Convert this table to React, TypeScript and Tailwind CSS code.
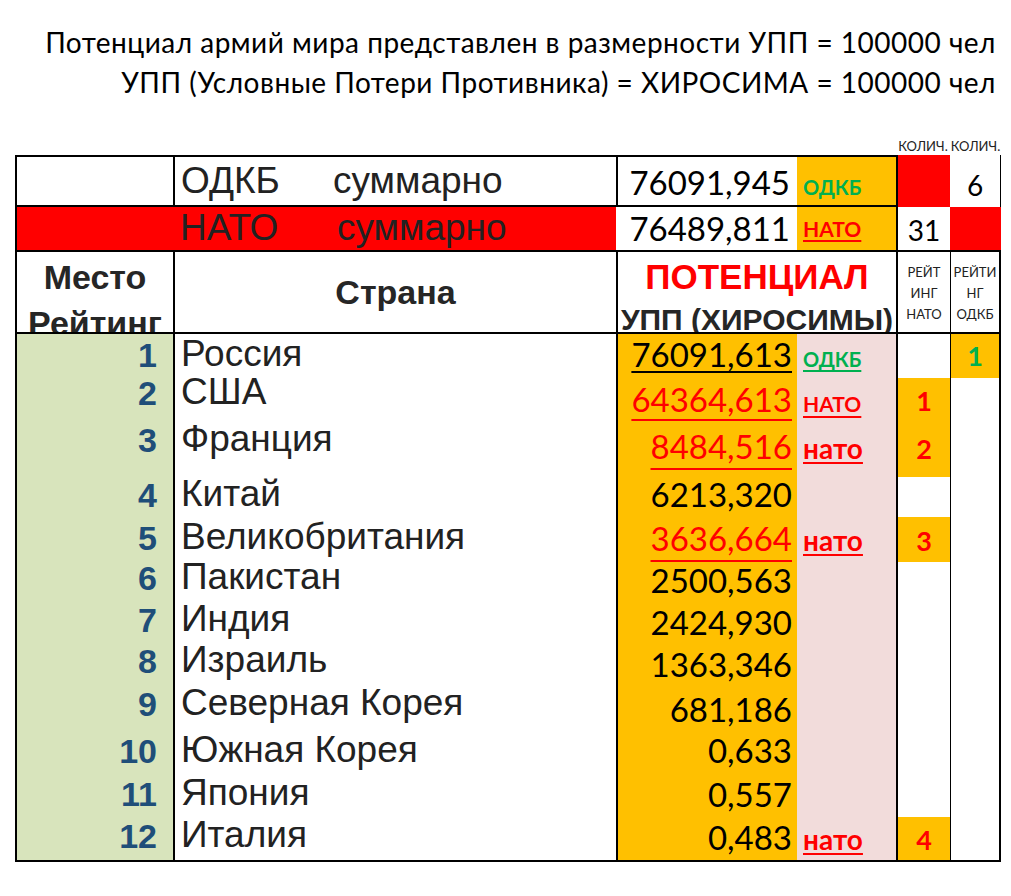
import React from 'react';

interface Row {
  n: number;
  country: string;
  value: string;
  valueCls: string;
  label?: string;
  labelCls?: string;
  nato?: string;
  odkb?: string;
  h: string;
  pa: string;
  pn: string;
  pl: string;
}

const numUnderlineRed = 'text-[#ff0000] underline decoration-[#ff0000] decoration-2 underline-offset-[9px]';
const natoLower = 'text-[28px] text-[#ff0000] underline decoration-2 underline-offset-[3px]';

const rows: Row[] = [
  { n: 1, country: 'Россия', value: '76091,613', valueCls: 'text-black underline decoration-2 underline-offset-[4px]', label: 'ОДКБ', labelCls: 'text-[20px] text-[#00b050] underline decoration-2 underline-offset-[3px]', odkb: '1', h: 'h-[44px]', pa: 'pb-[6px]', pn: 'pb-[7px]', pl: 'pb-[9px]' },
  { n: 2, country: 'США', value: '64364,613', valueCls: 'text-[#ff0000] underline decoration-[#ff0000] decoration-2 underline-offset-[7px]', label: 'НАТО', labelCls: 'text-[21px] text-[#ff0000] underline decoration-2 underline-offset-[4px]', nato: '1', h: 'h-[48px]', pa: 'pb-[16px]', pn: 'pb-[10px]', pl: 'pb-[12px]' },
  { n: 3, country: 'Франция', value: '8484,516', valueCls: numUnderlineRed, label: 'нато', labelCls: natoLower, nato: '2', h: 'h-[51px]', pa: 'pb-[20px]', pn: 'pb-[14px]', pl: 'pb-[15px]' },
  { n: 4, country: 'Китай', value: '6213,320', valueCls: 'text-black', h: 'h-[40px]', pa: 'pb-[5px]', pn: 'pb-[6px]', pl: 'pb-[7px]' },
  { n: 5, country: 'Великобритания', value: '3636,664', valueCls: numUnderlineRed, label: 'нато', labelCls: natoLower, nato: '3', h: 'h-[45px]', pa: 'pb-[7px]', pn: 'pb-[7px]', pl: 'pb-[8px]' },
  { n: 6, country: 'Пакистан', value: '2500,563', valueCls: 'text-black', h: 'h-[43px]', pa: 'pb-[10px]', pn: 'pb-[8px]', pl: 'pb-[9px]' },
  { n: 7, country: 'Индия', value: '2424,930', valueCls: 'text-black', h: 'h-[42px]', pa: 'pb-[10px]', pn: 'pb-[8px]', pl: 'pb-[9px]' },
  { n: 8, country: 'Израиль', value: '1363,346', valueCls: 'text-black', h: 'h-[43px]', pa: 'pb-[12px]', pn: 'pb-[9px]', pl: 'pb-[10px]' },
  { n: 9, country: 'Северная Корея', value: '681,186', valueCls: 'text-black', h: 'h-[42px]', pa: 'pb-[11px]', pn: 'pb-[6px]', pl: 'pb-[7px]' },
  { n: 10, country: 'Южная Корея', value: '0,633', valueCls: 'text-black', h: 'h-[43px]', pa: 'pb-[7px]', pn: 'pb-[8px]', pl: 'pb-[9px]' },
  { n: 11, country: 'Япония', value: '0,557', valueCls: 'text-black', h: 'h-[42px]', pa: 'pb-[6px]', pn: 'pb-[6px]', pl: 'pb-[7px]' },
  { n: 12, country: 'Италия', value: '0,483', valueCls: 'text-black', label: 'нато', labelCls: natoLower, nato: '4', h: 'h-[45px]', pa: 'pb-[7px]', pn: 'pb-[6px]', pl: 'pb-[7px]' },
];

// fixed track so tall text can't stretch a row
const grid = 'grid grid-cols-[158px_443px_181px_99px_54px_51px] grid-rows-[minmax(0,1fr)]';
const arial = "font-['Liberation_Sans',Arial,sans-serif]";
const calib = "font-['Lato','Open_Sans',sans-serif]";

function DataRow({ r, last }: { r: Row; last: boolean }) {
  const b = last ? 'border-b-2 border-black' : '';
  return (
    <div className={`${grid} ${r.h}`}>
      <div className={`flex min-h-0 items-end justify-end bg-[#d8e4bc] border-l-2 border-black pr-[16px] ${r.pa} ${b}`}>
        <span className={`${arial} text-[34px] leading-none font-bold text-[#1f4e79]`}>{r.n}</span>
      </div>
      <div className={`flex min-h-0 items-end border-l-2 border-black pl-[6px] ${r.pa} ${b}`}>
        <span className={`${arial} text-[37px] leading-none text-[#222]`}>{r.country}</span>
      </div>
      <div className={`flex min-h-0 items-end justify-end bg-[#ffc000] border-l-2 border-black pr-[5px] ${r.pn} ${b}`}>
        <span className={`${calib} text-[33px] leading-none ${r.valueCls}`}>{r.value}</span>
      </div>
      <div className={`flex min-h-0 items-end bg-[#f2dcdb] pl-[6px] ${r.pl} ${b}`}>
        {r.label && <span className={`${calib} leading-none font-bold ${r.labelCls}`}>{r.label}</span>}
      </div>
      <div className={`flex min-h-0 items-end justify-center border-l-2 border-black ${r.nato ? 'bg-[#ffc000]' : 'bg-white'} ${r.pl} ${b}`}>
        {r.nato && <span className={`${calib} text-[27px] leading-none font-bold text-[#ff0000]`}>{r.nato}</span>}
      </div>
      <div className={`flex min-h-0 items-end justify-center border-l border-r-2 border-black ${r.odkb ? 'bg-[#ffc000]' : 'bg-white'} ${r.pl} ${b}`}>
        {r.odkb && <span className={`${calib} text-[27px] leading-none font-bold text-[#00b050]`}>{r.odkb}</span>}
      </div>
    </div>
  );
}

export default function App() {
  return (
    <div className="w-[1011px] h-[896px] bg-white overflow-hidden text-black">
      {/* Title */}
      <div className={`${calib} text-right pr-[15px] pt-[22px] text-[28px] tracking-[0.5px] leading-[40px]`}>
        <div>Потенциал армий мира представлен в размерности УПП = 100000 чел</div>
        <div>УПП (Условные Потери Противника) = ХИРОСИМА = 100000 чел</div>
      </div>

      <div className="ml-[15px] mt-[35px] w-[986px]">
        {/* labels above */}
        <div className={`${grid} h-[18px]`}>
          <div className="col-span-4" />
          <div className={`${calib} text-[13px] leading-[18px] text-center text-[#222]`}>КОЛИЧ.</div>
          <div className={`${calib} text-[13px] leading-[18px] text-center text-[#222]`}>КОЛИЧ.</div>
        </div>

        {/* ODKB total */}
        <div className={`${grid} h-[52px]`}>
          <div className="border-l-2 border-y-2 border-black bg-white" />
          <div className={`flex items-end border-l-2 border-y-2 border-black bg-white pl-[6px] pb-[6px] ${arial} text-[37px] leading-none text-[#222]`}>
            <span className="w-[152px]">ОДКБ</span>
            <span>суммарно</span>
          </div>
          <div className="flex items-end justify-end border-l-2 border-y-2 border-black bg-white pr-[7px] pb-[6px]">
            <span className={`${calib} text-[33px] leading-none`}>76091,945</span>
          </div>
          <div className="flex items-end border-y-2 border-black bg-[#ffc000] pl-[6px] pb-[8px]">
            <span className={`${calib} text-[20px] leading-none font-bold text-[#00b050]`}>ОДКБ</span>
          </div>
          <div className="border-l-2 border-black bg-[#ff0000]" />
          <div className="flex items-end justify-center border-r border-black bg-white pb-[8px]">
            <span className={`${calib} text-[28px] leading-none`}>6</span>
          </div>
        </div>

        {/* NATO total */}
        <div className={`${grid} h-[45px]`}>
          <div className={`col-span-2 flex items-end border-l-2 border-b-2 border-black bg-[#ff0000] pl-[163px] pb-[4px] ${arial} text-[37px] leading-none text-[#222]`}>
            <span className="w-[157px]">НАТО</span>
            <span>суммарно</span>
          </div>
          <div className="flex items-end justify-end border-b-2 border-black bg-white pr-[7px] pb-[5px]">
            <span className={`${calib} text-[33px] leading-none`}>76489,811</span>
          </div>
          <div className="flex items-end border-b-2 border-black bg-[#ffc000] pl-[6px] pb-[11px]">
            <span className={`${calib} text-[21px] leading-none font-bold text-[#ff0000] underline decoration-2 underline-offset-[3px]`}>НАТО</span>
          </div>
          <div className="flex items-end justify-center border-l-2 border-b-2 border-black bg-white pb-[6px]">
            <span className={`${calib} text-[28px] leading-none`}>31</span>
          </div>
          <div className="border-b-2 border-black bg-[#ff0000]" />
        </div>

        {/* Header */}
        <div className={`${grid} h-[82px]`}>
          <div className={`overflow-hidden border-l-2 border-b-2 border-black bg-white pt-[2px] text-center ${arial} text-[34px] leading-[46px] font-bold text-[#262626]`}>
            <div>Место</div>
            <div>Рейтинг</div>
          </div>
          <div className={`flex items-center justify-center border-l-2 border-b-2 border-black bg-white ${arial} text-[34px] font-bold text-[#262626]`}>
            Страна
          </div>
          <div className={`col-span-2 overflow-hidden border-l-2 border-b-2 border-black bg-white text-center ${arial} font-bold`}>
            <div className="text-[35px] leading-[46px] pt-[2px] text-[#ff0000]">ПОТЕНЦИАЛ</div>
            <div className="text-[30px] leading-[40px] text-[#262626] whitespace-nowrap">УПП (ХИРОСИМЫ)</div>
          </div>
          <div className={`border-l-2 border-b-2 border-black bg-white pt-[10px] text-center ${calib} text-[13px] leading-[21px] text-[#222]`}>
            <div>РЕЙТ</div>
            <div>ИНГ</div>
            <div>НАТО</div>
          </div>
          <div className={`border-l border-r-2 border-b-2 border-black bg-white pt-[10px] text-center ${calib} text-[13px] leading-[21px] text-[#222]`}>
            <div>РЕЙТИ</div>
            <div>НГ</div>
            <div>ОДКБ</div>
          </div>
        </div>

        {rows.map((r, i) => (
          <DataRow key={r.n} r={r} last={i === rows.length - 1} />
        ))}
      </div>
    </div>
  );
}
